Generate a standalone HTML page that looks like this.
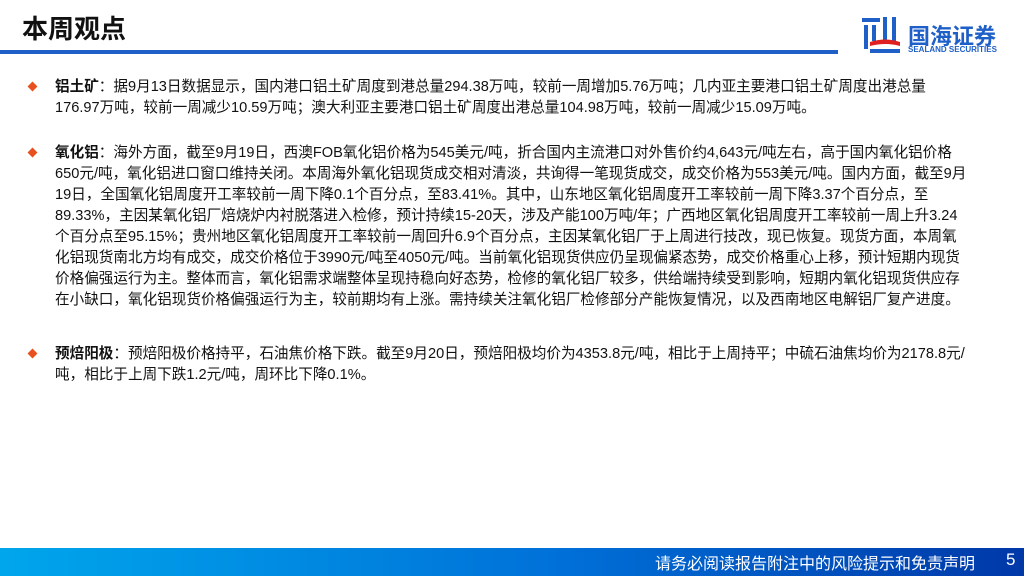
<!DOCTYPE html>
<html><head><meta charset="utf-8"><style>
body{margin:0;width:1024px;height:576px;position:relative;background:#fff;overflow:hidden;font-family:"Liberation Sans","Noto Sans CJK SC",sans-serif;color:#111}
.title{position:absolute;left:22px;top:9px;font-size:26px;font-weight:bold}
.line{position:absolute;left:0;top:50px;width:838px;height:4px;background:#1f5fc8}
.logo{position:absolute;left:860px;top:16px}
.b{position:absolute;left:55px;font-size:14.6px;line-height:21px;white-space:nowrap}
.d{position:absolute;left:29px;width:7px;height:7px;background:#e8501e;transform:rotate(45deg)}
.foot{position:absolute;left:0;top:548px;width:1024px;height:28px;background:linear-gradient(90deg,#00a6ec,#0070d8 55%,#0038a8)}
.ft{position:absolute;left:655px;top:550px;color:#fff;font-size:16px;white-space:nowrap}
.pn{position:absolute;left:1006px;top:550px;color:#fff;font-size:17px}
</style></head><body>
<div class="title">本周观点</div>
<div class="line"></div>
<div class="logo">
<svg width="44" height="40" viewBox="0 0 44 40"><rect x="2" y="2" width="18" height="4" fill="#1f5fc8"/><rect x="4" y="9" width="4" height="24" fill="#1f5fc8"/><rect x="12" y="9" width="4" height="16" fill="#1f5fc8"/><rect x="23" y="1" width="4" height="24" fill="#1f5fc8"/><rect x="32" y="1" width="4" height="24" fill="#1f5fc8"/><path d="M10 26 Q26 21 40 26 L40 30 Q26 26 10 30Z" fill="#e02020"/><rect x="10" y="33" width="30" height="4" fill="#1f5fc8"/></svg>
<span style="position:absolute;left:48px;top:3px;font-size:22px;font-weight:bold;color:#1f5fc8;white-space:nowrap">国海证券</span>
<span style="position:absolute;left:48px;top:29px;font-size:8px;font-weight:bold;color:#1f5fc8;white-space:nowrap">SEALAND SECURITIES</span>
</div>

<div class="d" style="top:83px"></div>
<div class="b" style="top:77px"><b>铝土矿</b>：据9月13日数据显示，国内港口铝土矿周度到港总量294.38万吨，较前一周增加5.76万吨；几内亚主要港口铝土矿周度出港总量</div>
<div class="b" style="top:98px">176.97万吨，较前一周减少10.59万吨；澳大利亚主要港口铝土矿周度出港总量104.98万吨，较前一周减少15.09万吨。</div>

<div class="d" style="top:149px"></div>
<div class="b" style="top:143px"><b>氧化铝</b>：海外方面，截至9月19日，西澳FOB氧化铝价格为545美元/吨，折合国内主流港口对外售价约4,643元/吨左右，高于国内氧化铝价格</div>
<div class="b" style="top:164px">650元/吨，氧化铝进口窗口维持关闭。本周海外氧化铝现货成交相对清淡，共询得一笔现货成交，成交价格为553美元/吨。国内方面，截至9月</div>
<div class="b" style="top:185px">19日，全国氧化铝周度开工率较前一周下降0.1个百分点，至83.41%。其中，山东地区氧化铝周度开工率较前一周下降3.37个百分点，至</div>
<div class="b" style="top:206px">89.33%，主因某氧化铝厂焙烧炉内衬脱落进入检修，预计持续15-20天，涉及产能100万吨/年；广西地区氧化铝周度开工率较前一周上升3.24</div>
<div class="b" style="top:227px">个百分点至95.15%；贵州地区氧化铝周度开工率较前一周回升6.9个百分点，主因某氧化铝厂于上周进行技改，现已恢复。现货方面，本周氧</div>
<div class="b" style="top:248px">化铝现货南北方均有成交，成交价格位于3990元/吨至4050元/吨。当前氧化铝现货供应仍呈现偏紧态势，成交价格重心上移，预计短期内现货</div>
<div class="b" style="top:269px">价格偏强运行为主。整体而言，氧化铝需求端整体呈现持稳向好态势，检修的氧化铝厂较多，供给端持续受到影响，短期内氧化铝现货供应存</div>
<div class="b" style="top:290px">在小缺口，氧化铝现货价格偏强运行为主，较前期均有上涨。需持续关注氧化铝厂检修部分产能恢复情况，以及西南地区电解铝厂复产进度。</div>

<div class="d" style="top:350px"></div>
<div class="b" style="top:344px"><b>预焙阳极</b>：预焙阳极价格持平，石油焦价格下跌。截至9月20日，预焙阳极均价为4353.8元/吨，相比于上周持平；中硫石油焦均价为2178.8元/</div>
<div class="b" style="top:365px">吨，相比于上周下跌1.2元/吨，周环比下降0.1%。</div>

<div class="foot"></div>
<div class="ft">请务必阅读报告附注中的风险提示和免责声明</div>
<div class="pn">5</div>
</body></html>
